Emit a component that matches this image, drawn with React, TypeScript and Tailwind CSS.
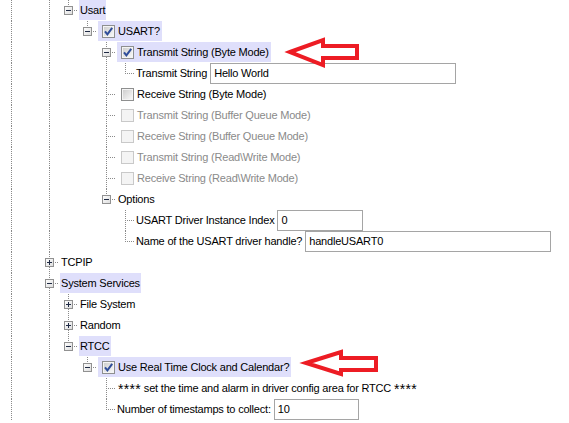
import React from 'react';

type Item =
  | { kind: 'text'; text: string; hl?: boolean; stars?: boolean }
  | { kind: 'check'; text: string; checked?: boolean; disabled?: boolean; hl?: boolean }
  | { kind: 'input'; text: string; value: string; width: string };

interface Row {
  guides: string;
  item: Item;
}

// guide codes: ' ' empty, '|' through line, 'T' tee, 'L' elbow,
// 'M' open expander with sibling below, 'm' open expander (last), 'P' closed expander with sibling below
const rows: Row[] = [
  { guides: '| |m', item: { kind: 'text', text: 'Usart', hl: true } },
  { guides: '| | m', item: { kind: 'check', text: 'USART?', checked: true, hl: true } },
  { guides: '| |  M', item: { kind: 'check', text: 'Transmit String (Byte Mode)', checked: true, hl: true } },
  { guides: '| |  |L', item: { kind: 'input', text: 'Transmit String', value: 'Hello World', width: 'w-[246px]' } },
  { guides: '| |  T', item: { kind: 'check', text: 'Receive String (Byte Mode)' } },
  { guides: '| |  T', item: { kind: 'check', text: 'Transmit String (Buffer Queue Mode)', disabled: true } },
  { guides: '| |  T', item: { kind: 'check', text: 'Receive String (Buffer Queue Mode)', disabled: true } },
  { guides: '| |  T', item: { kind: 'check', text: 'Transmit String (Read\\Write Mode)', disabled: true } },
  { guides: '| |  T', item: { kind: 'check', text: 'Receive String (Read\\Write Mode)', disabled: true } },
  { guides: '| |  m', item: { kind: 'text', text: 'Options' } },
  { guides: '| |   T', item: { kind: 'input', text: 'USART Driver Instance Index', value: '0', width: 'w-[86px]' } },
  { guides: '| |   L', item: { kind: 'input', text: 'Name of the USART driver handle?', value: 'handleUSART0', width: 'w-[246px]' } },
  { guides: '| P', item: { kind: 'text', text: 'TCPIP' } },
  { guides: '| M', item: { kind: 'text', text: 'System Services', hl: true } },
  { guides: '| |P', item: { kind: 'text', text: 'File System' } },
  { guides: '| |P', item: { kind: 'text', text: 'Random' } },
  { guides: '| |m', item: { kind: 'text', text: 'RTCC', hl: true } },
  { guides: '| | m', item: { kind: 'check', text: 'Use Real Time Clock and Calendar?', checked: true, hl: true } },
  { guides: '| |  T', item: { kind: 'text', text: ' set the time and alarm in driver config area for RTCC ', stars: true } },
  { guides: '| |  L', item: { kind: 'input', text: 'Number of timestamps to collect:', value: '10', width: 'w-[85px]' } },
];

const DOT = '#8a8a8a';

function Guide({ g }: { g: string }) {
  const line = (x1: number, y1: number, x2: number, y2: number) => (
    <line x1={x1} y1={y1} x2={x2} y2={y2} stroke={DOT} strokeDasharray="1 1" />
  );
  const isExp = g === 'M' || g === 'm' || g === 'P';
  return (
    <svg width="19" height="21" className="block shrink-0">
      {g === '|' && line(9.5, 0, 9.5, 21)}
      {g === 'T' && (
        <>
          {line(9.5, 0, 9.5, 21)}
          {line(11, 10.5, 19, 10.5)}
        </>
      )}
      {g === 'L' && (
        <>
          {line(9.5, 0, 9.5, 11)}
          {line(11, 10.5, 19, 10.5)}
        </>
      )}
      {isExp && (
        <>
          {line(9.5, 0, 9.5, 6)}
          {g !== 'm' && line(9.5, 15, 9.5, 21)}
          {line(15, 10.5, 19, 10.5)}
          <defs>
            <linearGradient id="expg" x1="0" y1="0" x2="1" y2="1">
              <stop offset="0" stopColor="#ffffff" />
              <stop offset="1" stopColor="#dcdcdc" />
            </linearGradient>
          </defs>
          <rect x="5.5" y="6.5" width="8" height="8" fill="url(#expg)" stroke="#919191" />
          <rect x="7" y="10" width="5" height="1" fill="#1f2a44" />
          {g === 'P' && <rect x="9" y="8" width="1" height="5" fill="#1f2a44" />}
        </>
      )}
    </svg>
  );
}

function CheckBox({ checked, disabled }: { checked?: boolean; disabled?: boolean }) {
  return (
    <svg width="13" height="13" className="block shrink-0">
      <defs>
        <linearGradient id="cbg" x1="0" y1="0" x2="1" y2="1">
          <stop offset="0" stopColor="#cfcfcf" />
          <stop offset="1" stopColor="#f7f7f7" />
        </linearGradient>
      </defs>
      <rect x="0.5" y="0.5" width="12" height="12" fill="#f4f4f4" stroke={disabled ? '#c9c9c9' : '#8e8f8f'} />
      {!disabled && <rect x="2" y="2" width="9" height="9" fill="url(#cbg)" />}
      {checked && (
        <path d="M3 6.3 L5.4 9.4 L10.2 2.8" fill="none" stroke="#2f4d9a" strokeWidth="2" />
      )}
    </svg>
  );
}

function ItemView({ item }: { item: Item }) {
  if (item.kind === 'text') {
    return (
      <span className={`h-[20px] flex items-center px-[1px] whitespace-pre ${item.hl ? 'bg-[#dfdffb]' : ''}`}>
        {item.stars ? (
          <>
            <span className="text-[14px] leading-none tracking-[0.3px] translate-y-[1px]">****</span>
            {item.text}
            <span className="text-[14px] leading-none tracking-[0.3px] translate-y-[1px]">****</span>
          </>
        ) : (
          item.text
        )}
      </span>
    );
  }
  if (item.kind === 'check') {
    return (
      <span
        className={`h-[20px] flex items-center pl-[4px] pr-[2px] gap-[3px] whitespace-nowrap ${
          item.hl ? 'bg-[#dfdffb]' : ''
        } ${item.disabled ? 'text-[#8a8a8a]' : ''}`}
      >
        <CheckBox checked={item.checked} disabled={item.disabled} />
        {item.text}
      </span>
    );
  }
  return (
    <span className="h-[21px] flex items-center whitespace-nowrap">
      <span>{item.text}</span>
      <span className={`ml-[3px] h-[21px] ${item.width} border border-[#a5a5a5] bg-white flex items-center pl-[3px]`}>
        {item.value}
      </span>
    </span>
  );
}

export default function App() {
  return (
    <div className="relative w-[569px] h-[423px] overflow-hidden bg-white text-[11px] tracking-[-0.2px] text-black font-['Liberation_Sans',Arial,sans-serif]">
      <div className="flex flex-col">
        {rows.map((r, i) => (
          <div key={i} className="flex items-start h-[21px] pl-[2px]">
            {r.guides.split('').map((g, j) => (
              <Guide key={j} g={g} />
            ))}
            <div className="ml-[1px]">
              <ItemView item={r.item} />
            </div>
          </div>
        ))}
      </div>

      {/* annotation arrows */}
      <svg width="569" height="423" className="absolute left-0 top-0 pointer-events-none">
        <polygon
          points="290,52 323,40 323,46 357,46 357,58 323,58 323,65"
          fill="none"
          stroke="#ed1c24"
          strokeWidth="4"
        />
        <polygon
          points="306,363 341,352 341,358 376,358 376,370 341,370 341,374"
          fill="none"
          stroke="#ed1c24"
          strokeWidth="4"
        />
      </svg>
    </div>
  );
}
